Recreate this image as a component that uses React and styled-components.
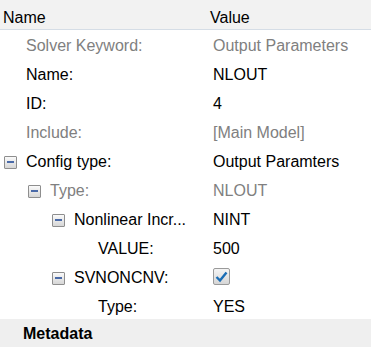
import React from "react";
import styled, { createGlobalStyle } from "styled-components";

const Global = createGlobalStyle`
  html, body { margin: 0; padding: 0; background: #ffffff; }
  body { font-family: "Liberation Sans", Arial, sans-serif; font-size: 16px; }
`;

const Panel = styled.div`
  width: 371px;
  height: 361px;
  background: #ffffff;
  overflow: hidden;
`;

const Header = styled.div`
  display: grid;
  grid-template-columns: 207px 1fr;
  height: 30px;
  box-sizing: border-box;
  background: #f2f2f2;
  border-bottom: 1px solid #d5dde6;
  color: #000;
  align-items: end;
`;

const HeaderCell = styled.div`
  padding-left: ${(p) => p.$pad}px;
  line-height: 22px;
`;

const Row = styled.div`
  display: grid;
  grid-template-columns: 210px 1fr;
  height: 29px;
  align-items: center;
  color: ${(p) => (p.$muted ? "#808080" : "#000000")};
`;

const NameCell = styled.div`
  display: flex;
  align-items: center;
  padding-left: ${(p) => 4 + p.$level * 24}px;
  white-space: nowrap;
  padding-top: 3px;
`;

const ValueCell = styled.div`
  padding-left: 3px;
  display: flex;
  align-items: center;
  padding-top: 3px;
`;

const Expander = styled.span`
  box-sizing: border-box;
  width: 13px;
  height: 13px;
  border: 1px solid #8e8e8e;
  border-radius: 1px;
  background: linear-gradient(#fafafa, #d6d6d6);
  margin-right: 9px;
  position: relative;
  flex: none;
  &::after {
    content: "";
    position: absolute;
    left: 2px;
    right: 2px;
    top: 4px;
    height: 2px;
    background: #4a6aa8;
  }
`;

const Spacer = styled.span`
  width: 22px;
  flex: none;
`;

const Check = styled.span`
  box-sizing: border-box;
  width: 17px;
  height: 17px;
  margin-top: -3px;
  border: 1px solid #9a9a9a;
  border-radius: 2px;
  background: linear-gradient(#f4f4f4, #d6d6d6);
  display: inline-flex;
  align-items: center;
  justify-content: center;
`;

const Section = styled.div`
  height: 28px;
  margin-top: -1px;
  background: #efefef;
  display: flex;
  align-items: center;
  padding-left: 23px;
  padding-top: 1px;
  box-sizing: border-box;
  font-weight: bold;
  color: #000;
`;

const rows = [
  { level: 0, name: "Solver Keyword:", value: "Output Parameters", muted: true },
  { level: 0, name: "Name:", value: "NLOUT" },
  { level: 0, name: "ID:", value: "4" },
  { level: 0, name: "Include:", value: "[Main Model]", muted: true },
  { level: 0, name: "Config type:", value: "Output Paramters", exp: true },
  { level: 1, name: "Type:", value: "NLOUT", exp: true, muted: true },
  { level: 2, name: "Nonlinear Incr...", value: "NINT", exp: true },
  { level: 3, name: "VALUE:", value: "500" },
  { level: 2, name: "SVNONCNV:", check: true, exp: true },
  { level: 3, name: "Type:", value: "YES" },
];

export default function App() {
  return (
    <Panel>
      <Global />
      <Header>
        <HeaderCell $pad={3}>Name</HeaderCell>
        <HeaderCell $pad={3}>Value</HeaderCell>
      </Header>
      {rows.map((r, i) => (
        <Row key={i} $muted={r.muted}>
          <NameCell $level={r.level}>
            {r.exp ? <Expander /> : <Spacer />}
            {r.name}
          </NameCell>
          <ValueCell>
            {r.check ? (
              <Check>
                <svg width="13" height="12" viewBox="0 0 13 12">
                  <path d="M1.5 6 L5 9.5 L11.5 1.5" fill="none" stroke="#1a6db5" strokeWidth="2.4" />
                </svg>
              </Check>
            ) : (
              r.value
            )}
          </ValueCell>
        </Row>
      ))}
      <Section>Metadata</Section>
    </Panel>
  );
}
